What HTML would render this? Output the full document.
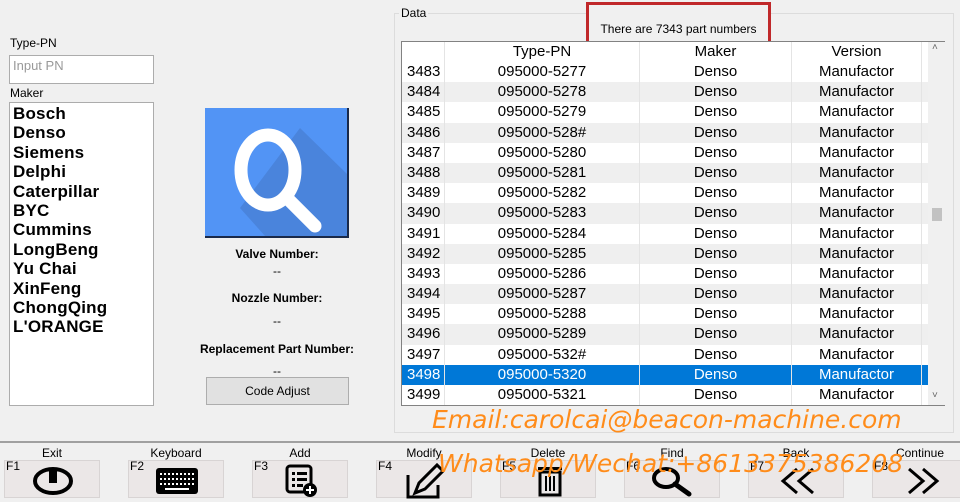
<!DOCTYPE html><html><head><meta charset="utf-8"><style>
*{margin:0;padding:0;box-sizing:border-box}
body{width:960px;height:502px;background:#f0f0f0;font-family:"Liberation Sans",sans-serif;position:relative;overflow:hidden;color:#000}
.a{position:absolute}
.lbl{font-size:12px}
.maker div{font-size:17px;font-weight:bold;line-height:19.4px;letter-spacing:0.2px}
.row{display:flex;height:20.2px;font-size:15px;line-height:20.2px;align-items:center}
.row div{text-align:center;border-right:1px solid #e4e4e4;height:100%}
.c0{width:43px;text-align:left!important;padding-left:5px}.c1{width:195px}.c2{width:152px}.c3{width:130px}
.g{background:#efefef}.s{background:#0078d7;color:#fff}
.btn{position:absolute;top:460px;width:96px;height:38px;background:#ebe7e7;border:1px solid #d8d4d4}
.fk{position:absolute;left:1px;top:-2px;font-size:12px}
.bl{position:absolute;top:446px;font-size:12px;text-align:center;width:96px}
.or{color:#ff8c1a;font-style:italic;font-size:25px;font-family:"DejaVu Sans",sans-serif;position:absolute;white-space:nowrap}
</style></head><body>
<div class="a lbl" style="left:10px;top:36px">Type-PN</div>
<div class="a" style="left:9px;top:55px;width:145px;height:29px;background:#fff;border:1px solid #acacac;color:#999;font-size:13px;padding:2px 3px">Input PN</div>
<div class="a lbl" style="left:10px;top:86px">Maker</div>
<div class="a maker" style="left:9px;top:102px;width:145px;height:304px;background:#fff;border:1px solid #acacac;padding:1px 3px">
<div>Bosch</div><div>Denso</div><div>Siemens</div><div>Delphi</div><div>Caterpillar</div><div>BYC</div><div>Cummins</div><div>LongBeng</div><div>Yu Chai</div><div>XinFeng</div><div>ChongQing</div><div>L'ORANGE</div></div>
<svg class="a" style="left:205px;top:108px" width="145" height="131" viewBox="0 0 145 131">
<rect x="0" y="0" width="144" height="130" fill="#1a2a4a"/>
<rect x="0" y="0" width="142" height="128" fill="#5294f5"/>
<polygon points="95,20 142,66 142,128 60,128 35,100" fill="#4a84dc"/>
<ellipse cx="63" cy="62" rx="27" ry="35" fill="none" stroke="#fff" stroke-width="13"/>
<line x1="82" y1="90" x2="110" y2="118" stroke="#fff" stroke-width="13" stroke-linecap="round"/>
</svg>
<div class="a" style="left:206px;top:247px;width:142px;text-align:center;font-size:12px;font-weight:bold">Valve Number:</div>
<div class="a" style="left:206px;top:264px;width:142px;text-align:center;font-size:12px">--</div>
<div class="a" style="left:206px;top:291px;width:142px;text-align:center;font-size:12px;font-weight:bold">Nozzle Number:</div>
<div class="a" style="left:206px;top:314px;width:142px;text-align:center;font-size:12px">--</div>
<div class="a" style="left:196px;top:342px;width:162px;text-align:center;font-size:12px;font-weight:bold">Replacement Part Number:</div>
<div class="a" style="left:206px;top:364px;width:142px;text-align:center;font-size:12px">--</div>
<div class="a" style="left:206px;top:377px;width:143px;height:28px;background:#e1e1e1;border:1px solid #adadad;text-align:center;font-size:12px;line-height:26px">Code Adjust</div>
<div class="a" style="left:394px;top:13px;width:560px;height:420px;border:1px solid #dcdcdc"></div>
<div class="a lbl" style="left:399px;top:6px;background:#f0f0f0;padding:0 2px">Data</div>
<div class="a" style="left:586px;top:2px;width:185px;height:45px;border:3px solid #c0282a;font-size:12px;text-align:center;line-height:48px;background:#f0f0f0">There are 7343 part numbers</div>
<div class="a" style="left:401px;top:41px;width:544px;height:365px;background:#fff;border:1px solid #828282">
<div class="row" style="height:20px"><div class="c0"></div><div class="c1">Type-PN</div><div class="c2">Maker</div><div class="c3">Version</div></div>
<div class="row"><div class="c0">3483</div><div class="c1">095000-5277</div><div class="c2">Denso</div><div class="c3">Manufactor</div></div>
<div class="row g"><div class="c0">3484</div><div class="c1">095000-5278</div><div class="c2">Denso</div><div class="c3">Manufactor</div></div>
<div class="row"><div class="c0">3485</div><div class="c1">095000-5279</div><div class="c2">Denso</div><div class="c3">Manufactor</div></div>
<div class="row g"><div class="c0">3486</div><div class="c1">095000-528#</div><div class="c2">Denso</div><div class="c3">Manufactor</div></div>
<div class="row"><div class="c0">3487</div><div class="c1">095000-5280</div><div class="c2">Denso</div><div class="c3">Manufactor</div></div>
<div class="row g"><div class="c0">3488</div><div class="c1">095000-5281</div><div class="c2">Denso</div><div class="c3">Manufactor</div></div>
<div class="row"><div class="c0">3489</div><div class="c1">095000-5282</div><div class="c2">Denso</div><div class="c3">Manufactor</div></div>
<div class="row g"><div class="c0">3490</div><div class="c1">095000-5283</div><div class="c2">Denso</div><div class="c3">Manufactor</div></div>
<div class="row"><div class="c0">3491</div><div class="c1">095000-5284</div><div class="c2">Denso</div><div class="c3">Manufactor</div></div>
<div class="row g"><div class="c0">3492</div><div class="c1">095000-5285</div><div class="c2">Denso</div><div class="c3">Manufactor</div></div>
<div class="row"><div class="c0">3493</div><div class="c1">095000-5286</div><div class="c2">Denso</div><div class="c3">Manufactor</div></div>
<div class="row g"><div class="c0">3494</div><div class="c1">095000-5287</div><div class="c2">Denso</div><div class="c3">Manufactor</div></div>
<div class="row"><div class="c0">3495</div><div class="c1">095000-5288</div><div class="c2">Denso</div><div class="c3">Manufactor</div></div>
<div class="row g"><div class="c0">3496</div><div class="c1">095000-5289</div><div class="c2">Denso</div><div class="c3">Manufactor</div></div>
<div class="row"><div class="c0">3497</div><div class="c1">095000-532#</div><div class="c2">Denso</div><div class="c3">Manufactor</div></div>
<div class="row s"><div class="c0">3498</div><div class="c1">095000-5320</div><div class="c2">Denso</div><div class="c3">Manufactor</div></div>
<div class="row"><div class="c0">3499</div><div class="c1">095000-5321</div><div class="c2">Denso</div><div class="c3">Manufactor</div></div>
<div class="a" style="left:526px;top:0;width:17px;height:363px;background:#f0f0f0"></div>
<div class="a" style="left:530px;top:166px;width:10px;height:13px;background:#c2c2c2"></div>
<div class="a" style="left:530px;top:0;font-size:10px;color:#666">&#x2c4;</div>
<div class="a" style="left:530px;top:348px;font-size:10px;color:#666">&#x2c5;</div>
</div>
<div class="or" style="left:432px;top:405px">Email:carolcai@beacon-machine.com</div>
<div class="a" style="left:0;top:441px;width:960px;height:2px;background:#a0a0a0"></div>
<div class="bl" style="left:4px">Exit</div><div class="bl" style="left:128px">Keyboard</div><div class="bl" style="left:252px">Add</div><div class="bl" style="left:376px">Modify</div>
<div class="bl" style="left:500px">Delete</div><div class="bl" style="left:624px">Find</div><div class="bl" style="left:748px">Back</div><div class="bl" style="left:872px">Continue</div>
<div class="btn" style="left:4px"><span class="fk">F1</span><svg class="a" style="left:27px;top:5px" width="42" height="30"><ellipse cx="21" cy="15" rx="18" ry="12" fill="none" stroke="#000" stroke-width="4"/><rect x="17" y="2" width="8" height="15" fill="#000"/></svg></div>
<div class="btn" style="left:128px"><span class="fk">F2</span><svg class="a" style="left:26px;top:6px" width="44" height="28"><rect x="1" y="1" width="42" height="26" rx="3" fill="#000"/><g stroke="#fff" stroke-width="2" stroke-dasharray="2 2"><path d="M5 7h34M5 12h34M5 17h34"/></g><rect x="10" y="21" width="24" height="2" fill="#fff"/></svg></div>
<div class="btn" style="left:252px"><span class="fk">F3</span><svg class="a" style="left:32px;top:3px" width="34" height="34"><rect x="2" y="2" width="24" height="26" rx="3" fill="none" stroke="#000" stroke-width="3"/><g fill="#000"><rect x="7" y="8" width="3" height="3"/><rect x="12" y="8" width="10" height="3"/><rect x="7" y="14" width="3" height="3"/><rect x="12" y="14" width="10" height="3"/><rect x="7" y="20" width="3" height="3"/><rect x="12" y="20" width="6" height="3"/></g><circle cx="25" cy="26" r="7" fill="#000"/><path d="M21 26h8M25 22v8" stroke="#fff" stroke-width="2"/></svg></div>
<div class="btn" style="left:376px"><span class="fk">F4</span><svg class="a" style="left:28px;top:2px" width="42" height="36"><path d="M3 12v22h30V22" fill="none" stroke="#000" stroke-width="3"/><path d="M10 30l4-10 18-18 6 6-18 18z" fill="none" stroke="#000" stroke-width="3"/></svg></div>
<div class="btn" style="left:500px"><span class="fk">F5</span><svg class="a" style="left:34px;top:4px" width="30" height="32"><rect x="3" y="2" width="24" height="3" fill="#000"/><rect x="5" y="7" width="20" height="23" fill="none" stroke="#000" stroke-width="3"/><path d="M11 11v15M15 11v15M19 11v15" stroke="#000" stroke-width="2"/></svg></div>
<div class="btn" style="left:624px"><span class="fk">F6</span><svg class="a" style="left:26px;top:4px" width="44" height="32"><ellipse cx="15" cy="13" rx="12" ry="9" fill="none" stroke="#000" stroke-width="4"/><path d="M24 19l14 10" stroke="#000" stroke-width="5" stroke-linecap="round"/></svg></div>
<div class="btn" style="left:748px"><span class="fk">F7</span><svg class="a" style="left:30px;top:5px" width="40" height="30"><path d="M18 3L4 15l14 12M34 3L20 15l14 12" fill="none" stroke="#000" stroke-width="3"/></svg></div>
<div class="btn" style="left:872px"><span class="fk">F8</span><svg class="a" style="left:30px;top:5px" width="40" height="30"><path d="M6 3l14 12L6 27M20 3l14 12-14 12" fill="none" stroke="#000" stroke-width="3"/></svg></div>
<div class="or" style="left:438px;top:449px">Whatsapp/Wechat:+8613375386208</div>
</body></html>
